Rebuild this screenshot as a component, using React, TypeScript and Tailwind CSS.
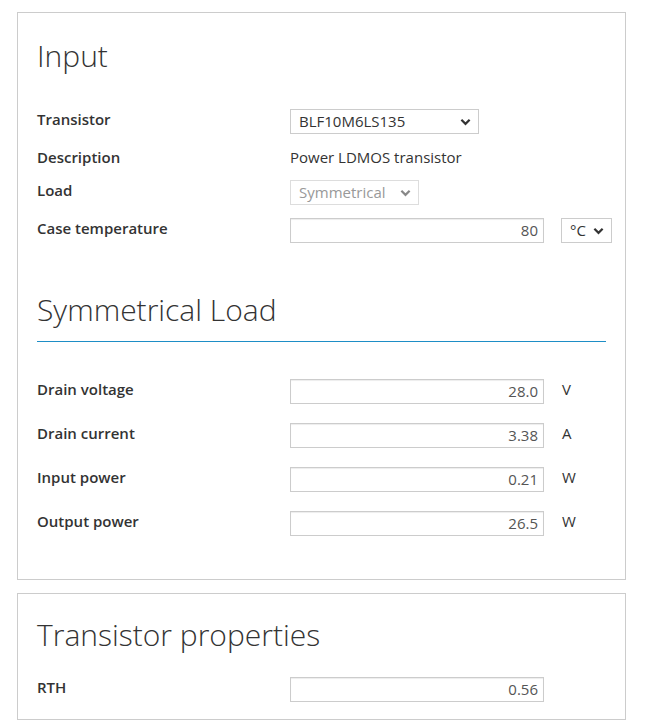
import type { ReactNode } from 'react'

const font = { fontFamily: '"Open Sans", "Liberation Sans", sans-serif' }

function Chevron({ className }: { className?: string }) {
  return (
    <svg viewBox="0 0 12 8" className={className} fill="none" aria-hidden="true">
      <polyline points="1.5,1.5 6,6 10.5,1.5" stroke="currentColor" strokeWidth="2.4" />
    </svg>
  )
}

function Row({ label, children }: { label: string; children: ReactNode }) {
  return (
    <div className="flex items-start">
      <div className="w-[253px] shrink-0 text-[15px] leading-5 font-semibold text-[#333]">{label}</div>
      {children}
    </div>
  )
}

function NumberBox({ value }: { value: string }) {
  return (
    <div className="flex h-[25px] w-[254px] shrink-0 items-center justify-end border border-[#ccc] bg-white px-[5px] text-[15px] text-[#555] shadow-[inset_0_1px_1px_rgba(0,0,0,0.075)]">
      {value}
    </div>
  )
}

function Select({ value, width, disabled }: { value: string; width: string; disabled?: boolean }) {
  return (
    <div
      className={`flex h-[25px] shrink-0 items-center justify-between border bg-white pr-[7px] pl-[8px] text-[15px] ${width} ${
        disabled ? 'border-[#ddd] text-[#999]' : 'border-[#ccc] text-[#333]'
      }`}
    >
      <span>{value}</span>
      <Chevron className={`h-[8px] w-[11px] ${disabled ? 'text-[#888]' : 'text-[#333]'}`} />
    </div>
  )
}

function Heading({ children }: { children: ReactNode }) {
  return <h2 className="text-[30px] leading-[40px] font-light text-[#333]">{children}</h2>
}

export default function App() {
  const loadRows = [
    { label: 'Drain voltage', value: '28.0', unit: 'V' },
    { label: 'Drain current', value: '3.38', unit: 'A' },
    { label: 'Input power', value: '0.21', unit: 'W' },
    { label: 'Output power', value: '26.5', unit: 'W' },
  ]

  return (
    <div className="flex min-h-[722px] flex-col gap-[13px] bg-white pt-[12px] pl-[17px]" style={font}>
      <section className="flex w-[609px] flex-col border border-[#ccc] px-[19px] pt-[23px] pb-[43px]">
        <Heading>Input</Heading>

        <div className="mt-[33px] flex flex-col gap-[13px]">
          <Row label="Transistor">
            <Select value="BLF10M6LS135" width="w-[189px]" />
          </Row>
          <Row label="Description">
            <div className="text-[15px] leading-5 text-[#333]">Power LDMOS transistor</div>
          </Row>
          <Row label="Load">
            <Select value="Symmetrical" width="w-[129px]" disabled />
          </Row>
          <Row label="Case temperature">
            <NumberBox value="80" />
            <div className="ml-[17px]">
              <Select value="°C" width="w-[51px]" />
            </div>
          </Row>
        </div>

        <div className="mt-[47px]">
          <Heading>Symmetrical Load</Heading>
          <div className="mt-[11px] h-px bg-[#1e8ec6]" />
        </div>

        <div className="mt-[37px] flex flex-col gap-[19px]">
          {loadRows.map((r) => (
            <Row key={r.label} label={r.label}>
              <NumberBox value={r.value} />
              <div className="ml-[18px] shrink-0 text-[15px] leading-5 text-[#333]">{r.unit}</div>
            </Row>
          ))}
        </div>
      </section>

      <section className="flex w-[609px] flex-col border border-[#ccc] px-[19px] pt-[21px] pb-[17px]">
        <Heading>Transistor properties</Heading>
        <div className="mt-[22px]">
          <Row label="RTH">
            <NumberBox value="0.56" />
          </Row>
        </div>
      </section>
    </div>
  )
}
